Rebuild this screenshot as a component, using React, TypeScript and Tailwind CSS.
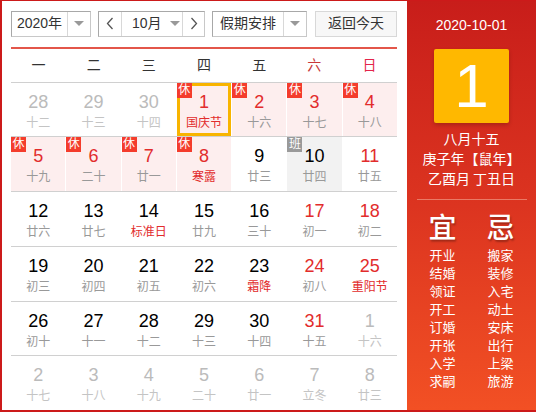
import React from "react";

type Day = {
  n: number;
  l: string;
  other?: boolean;
  red?: boolean;
  lred?: boolean;
  rest?: boolean;
  work?: boolean;
  sel?: boolean;
  gray?: boolean;
};

const rows: Day[][] = [
  [
    { n: 28, l: "十二", other: true },
    { n: 29, l: "十三", other: true },
    { n: 30, l: "十四", other: true },
    { n: 1, l: "国庆节", red: true, lred: true, rest: true, sel: true },
    { n: 2, l: "十六", red: true, rest: true },
    { n: 3, l: "十七", red: true, rest: true },
    { n: 4, l: "十八", red: true, rest: true },
  ],
  [
    { n: 5, l: "十九", red: true, rest: true },
    { n: 6, l: "二十", red: true, rest: true },
    { n: 7, l: "廿一", red: true, rest: true },
    { n: 8, l: "寒露", red: true, lred: true, rest: true },
    { n: 9, l: "廿三" },
    { n: 10, l: "廿四", work: true, gray: true },
    { n: 11, l: "廿五", red: true },
  ],
  [
    { n: 12, l: "廿六" },
    { n: 13, l: "廿七" },
    { n: 14, l: "标准日", lred: true },
    { n: 15, l: "廿九" },
    { n: 16, l: "三十" },
    { n: 17, l: "初一", red: true },
    { n: 18, l: "初二", red: true },
  ],
  [
    { n: 19, l: "初三" },
    { n: 20, l: "初四" },
    { n: 21, l: "初五" },
    { n: 22, l: "初六" },
    { n: 23, l: "霜降", lred: true },
    { n: 24, l: "初八", red: true },
    { n: 25, l: "重阳节", red: true, lred: true },
  ],
  [
    { n: 26, l: "初十" },
    { n: 27, l: "十一" },
    { n: 28, l: "十二" },
    { n: 29, l: "十三" },
    { n: 30, l: "十四" },
    { n: 31, l: "十五", red: true },
    { n: 1, l: "十六", other: true },
  ],
  [
    { n: 2, l: "十七", other: true },
    { n: 3, l: "十八", other: true },
    { n: 4, l: "十九", other: true },
    { n: 5, l: "二十", other: true },
    { n: 6, l: "廿一", other: true },
    { n: 7, l: "立冬", other: true },
    { n: 8, l: "廿三", other: true },
  ],
];

const yi = ["开业", "结婚", "领证", "开工", "订婚", "开张", "入学", "求嗣"];
const ji = ["搬家", "装修", "入宅", "动土", "安床", "出行", "上梁", "旅游"];

const font = {
  fontFamily: '"Liberation Sans", "Noto Sans CJK SC", Arial, sans-serif',
};
const cjk = { fontFamily: '"Noto Sans CJK SC", sans-serif' };

function Caret() {
  return (
    <span className="inline-block w-0 h-0 border-l-[5px] border-r-[5px] border-t-[5px] border-l-transparent border-r-transparent border-t-[#999]" />
  );
}

function Chevron({ dir }: { dir: "l" | "r" }) {
  return (
    <svg width="8" height="13" viewBox="0 0 8 13" fill="none">
      <path
        d={dir === "l" ? "M6.5 1 L1.5 6.5 L6.5 12" : "M1.5 1 L6.5 6.5 L1.5 12"}
        stroke="#555"
        strokeWidth="1.3"
      />
    </svg>
  );
}

function Cell({ d }: { d: Day }) {
  const bg = d.rest ? "bg-[#fdeeee]" : d.gray ? "bg-[#f2f2f2]" : "bg-white";
  const numColor = d.other
    ? "text-[#bbbbbb]"
    : d.red
    ? "text-[#e22c2c]"
    : "text-black";
  const lunarColor = d.other
    ? "text-[#c4c4c4]"
    : d.lred
    ? "text-[#e22c2c]"
    : "text-[#999999]";
  return (
    <div className={`relative h-full ${bg}`}>
      {d.sel && (
        <div className="absolute inset-0 border-[3px] border-[#f8b400] pointer-events-none" />
      )}
      {d.rest && (
        <div className="absolute left-0 top-0 w-[15px] h-[15px] bg-[#f43c2c] text-white text-[12px] leading-[15px] text-center">
          休
        </div>
      )}
      {d.work && (
        <div className="absolute left-0 top-0 w-[15px] h-[15px] bg-[#9a9a9a] text-white text-[12px] leading-[15px] text-center">
          班
        </div>
      )}
      <div className="flex flex-col items-center pt-[8px]">
        <div className={`text-[18px] leading-[22px] ${numColor}`}>{d.n}</div>
        <div className={`text-[12px] leading-[16px] mt-[2px] ${lunarColor}`}>
          {d.l}
        </div>
      </div>
    </div>
  );
}

export default function App() {
  return (
    <div
      className="w-[536px] h-[412px] flex border-l-2 border-b-2 border-t border-[#cc1a1a] bg-white text-[#333]"
      style={font}
    >
      <div className="w-[405px] pl-[9px] pr-[10px] pt-[10px] flex flex-col">
        {/* toolbar */}
        <div className="flex h-[26px] text-[14px] text-[#333] whitespace-nowrap">
          <div className="flex w-[80px] border border-[#c8c8c8] border-t-[#a8a8a8] border-l-[#a8a8a8] bg-white">
            <div className="w-[55px] flex items-center justify-center">2020年</div>
            <div className="flex-1 flex items-center justify-center border-l border-[#d8d8d8]">
              <Caret />
            </div>
          </div>
          <div className="flex w-[107px] ml-[7px] border border-[#c8c8c8] border-t-[#a8a8a8] border-l-[#a8a8a8] bg-white">
            <div className="w-[22px] flex items-center justify-center">
              <Chevron dir="l" />
            </div>
            <div className="w-[62px] shrink-0 flex items-center border-l border-r border-[#d8d8d8] pl-[10px]">
              <span>10月</span>
              <span className="ml-[8px] flex items-center">
                <Caret />
              </span>
            </div>
            <div className="flex-1 flex items-center justify-center">
              <Chevron dir="r" />
            </div>
          </div>
          <div className="flex w-[95px] ml-[7px] border border-[#c8c8c8] border-t-[#a8a8a8] border-l-[#a8a8a8] bg-white">
            <div className="w-[70px] flex items-center justify-center">假期安排</div>
            <div className="flex-1 flex items-center justify-center border-l border-[#d8d8d8]">
              <Caret />
            </div>
          </div>
          <div className="w-[82px] ml-[8px] border border-[#d8d8d8] bg-[#f7f7f7] flex items-center justify-center">
            返回今天
          </div>
        </div>
        <div className="mt-[10px] h-[2px] bg-[#e3564a]" />
        {/* weekday header */}
        <div className="grid grid-cols-7 h-[33px] items-center text-[14px]">
          {["一", "二", "三", "四", "五", "六", "日"].map((w, i) => (
            <div
              key={w}
              className={`text-center ${
                i === 5 ? "text-[#c8383a]" : i === 6 ? "text-[#e3254a]" : "text-[#333]"
              }`}
            >
              {w}
            </div>
          ))}
        </div>
        {rows.map((r, ri) => (
          <div
            key={ri}
            className="grid grid-cols-7 gap-x-px h-[55px] border-t border-[#d0d0d0]"
          >
            {r.map((d, di) => (
              <Cell key={di} d={d} />
            ))}
          </div>
        ))}
      </div>
      {/* right panel */}
      <div className="flex-1 flex flex-col items-center bg-gradient-to-b from-[#c81d1a] via-[#dc3420] to-[#f25024] text-white">
        <div className="mt-[14px] text-[14px] leading-[20px]">2020-10-01</div>
        <div className="mt-[14px] w-[75px] h-[74px] rounded-[2px] bg-[#ffb800] shadow-[0_2px_4px_rgba(0,0,0,0.2)] flex items-center justify-center text-[62px] leading-none">
          1
        </div>
        <div className="mt-[5px] text-[14px] leading-[20px] text-center" style={cjk}>
          <div>八月十五</div>
          <div>庚子年【鼠年】</div>
          <div>乙酉月 丁丑日</div>
        </div>
        <div className="mt-[11px] w-[110px] h-px bg-[#ea7a66]" />
        <div className="mt-[10px] flex gap-[30px]" style={cjk}>
          {[
            ["宜", yi],
            ["忌", ji],
          ].map(([t, list]) => (
            <div key={t as string} className="flex flex-col items-center">
              <div className="h-[32px] text-[28px] leading-[32px] font-medium [text-shadow:1px_2px_2px_rgba(0,0,0,0.3)]">
                {t as string}
              </div>
              <div className="mt-[4px] flex flex-col items-center text-[13px] leading-[18px]">
                {(list as string[]).map((x) => (
                  <div key={x}>{x}</div>
                ))}
              </div>
            </div>
          ))}
        </div>
      </div>
    </div>
  );
}
